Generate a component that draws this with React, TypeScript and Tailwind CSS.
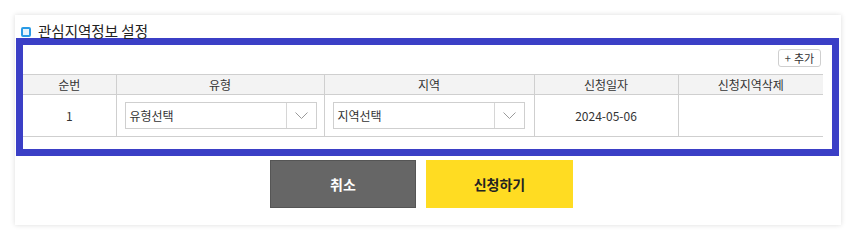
type Col = { label: string; width: string };

const columns: Col[] = [
  { label: '순번', width: 'w-[93px]' },
  { label: '유형', width: 'w-[208px]' },
  { label: '지역', width: 'w-[210px]' },
  { label: '신청일자', width: 'w-[144px]' },
  { label: '신청지역삭제', width: 'w-[145px]' },
];

function SelectBox({ placeholder }: { placeholder: string }) {
  return (
    <div className="flex h-[27px] w-[192px] border border-[#cfcfcf] bg-white">
      <div className="flex flex-1 items-center pl-[4px] text-[12px] text-[#333]">{placeholder}</div>
      <div className="flex w-[30px] items-center justify-center border-l border-[#d6d6d6]">
        <svg width="13" height="7" viewBox="0 0 13 7" fill="none">
          <polyline points="0.5,0.5 6.5,6.5 12.5,0.5" stroke="#9a9a9a" strokeWidth="1" />
        </svg>
      </div>
    </div>
  );
}

export default function App() {
  return (
    <div
      className="h-[242px] w-[857px] bg-white pl-[15px] pt-[15px]"
      style={{ fontFamily: '"Noto Sans CJK KR", "Noto Sans", sans-serif' }}
    >
      <div className="h-[210px] w-[826px] bg-white shadow-[0_0_5px_rgba(0,0,0,0.14)]">
        <div className="flex h-[23px] items-end gap-[7px] pl-[6px]">
          <span className="mb-[1px] h-[10px] w-[10px] rounded-[2px] border-2 border-[#2a9be6] bg-[#e6f4fd]" />
          <h2 className="mb-[-2px] text-[14.5px] leading-[18px] text-[#222]">관심지역정보 설정</h2>
        </div>

        <div className="ml-[1px] h-[118px] w-[823px] border-[7px] border-[#3b3fc6] bg-white">
          <div className="flex justify-end pr-[11px] pt-[4px]">
            <button className="flex h-[18px] w-[43px] items-center justify-center gap-[3px] rounded-[3px] border border-[#cfcfcf] bg-white text-[11px] text-[#333]">
              <span className="text-[11px] leading-none text-[#444]">+</span>
              <span>추가</span>
            </button>
          </div>

          <table className="mt-[7px] w-[800px] table-fixed border-collapse text-[12px] text-[#333]">
            <thead>
              <tr className="h-[20px] bg-[#f3f3f3]">
                {columns.map((c, i) => (
                  <th
                    key={c.label}
                    className={`${c.width} border-y border-[#cfcfcf] p-0 font-normal leading-[18px] ${
                      i > 0 ? 'border-l' : ''
                    }`}
                  >
                    {c.label}
                  </th>
                ))}
              </tr>
            </thead>
            <tbody>
              <tr className="h-[42px]">
                <td className="border-b border-[#cfcfcf] p-0 text-center">1</td>
                <td className="border-b border-l border-[#cfcfcf] px-[8px] py-0">
                  <SelectBox placeholder="유형선택" />
                </td>
                <td className="border-b border-l border-[#cfcfcf] px-[8px] py-0">
                  <SelectBox placeholder="지역선택" />
                </td>
                <td className="border-b border-l border-[#cfcfcf] p-0 text-center">2024-05-06</td>
                <td className="border-b border-l border-[#cfcfcf] p-0" />
              </tr>
            </tbody>
          </table>
        </div>

        <div className="mt-[4px] flex gap-[10px] pl-[255px]">
          <button className="h-[48px] w-[146px] border border-[#555] bg-[#666] text-[14px] font-bold text-white">
            취소
          </button>
          <button className="h-[48px] w-[147px] bg-[#ffdc22] text-[14px] font-bold text-[#222]">
            신청하기
          </button>
        </div>
      </div>
    </div>
  );
}
